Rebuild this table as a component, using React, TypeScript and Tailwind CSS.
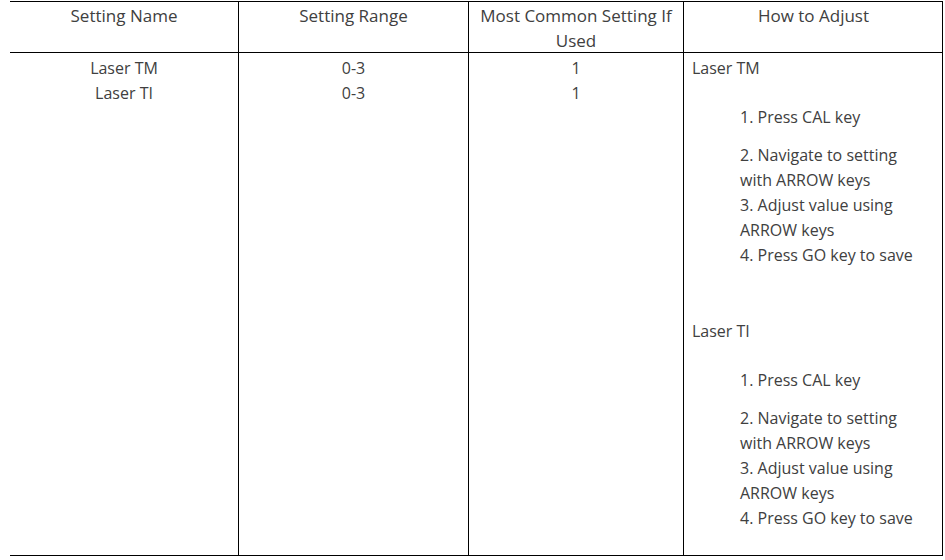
export default function App() {
  const font = { fontFamily: '"Open Sans", "Noto Sans", sans-serif' };
  const steps = (
    <div className="pl-[48px]">
      <div className="mt-[24px]">1. Press CAL key</div>
      <div className="mt-[13px]">
        2. Navigate to setting
        <br />
        with ARROW keys
      </div>
      <div>
        3. Adjust value using
        <br />
        ARROW keys
      </div>
      <div>4. Press GO key to save</div>
    </div>
  );
  return (
    <div className="bg-white w-[945px] h-[560px] pt-[1px] text-[#404040] text-[16px] leading-[25px]" style={font}>
      <div className="ml-[10px] w-[933px] border-t border-b border-r border-black">
        <div className="grid grid-cols-[229px_230px_215px_259px] h-[51px] border-b border-black text-[17px]">
          <div className="border-r border-black text-center pt-[1px]">Setting Name</div>
          <div className="border-r border-black text-center pt-[1px]">Setting Range</div>
          <div className="border-r border-black text-center pt-[1px] px-1">Most Common Setting If Used</div>
          <div className="text-center pt-[1px]">How to Adjust</div>
        </div>
        <div className="grid grid-cols-[229px_230px_215px_259px] h-[502px]">
          <div className="border-r border-black text-center pt-[3px]">
            <div>Laser TM</div>
            <div>Laser TI</div>
          </div>
          <div className="border-r border-black text-center pt-[3px]">
            <div>0-3</div>
            <div>0-3</div>
          </div>
          <div className="border-r border-black text-center pt-[3px]">
            <div>1</div>
            <div>1</div>
          </div>
          <div className="pt-[3px] pl-[8px]">
            <div>Laser TM</div>
            {steps}
            <div className="mt-[51px]">Laser TI</div>
            {steps}
          </div>
        </div>
      </div>
    </div>
  );
}
